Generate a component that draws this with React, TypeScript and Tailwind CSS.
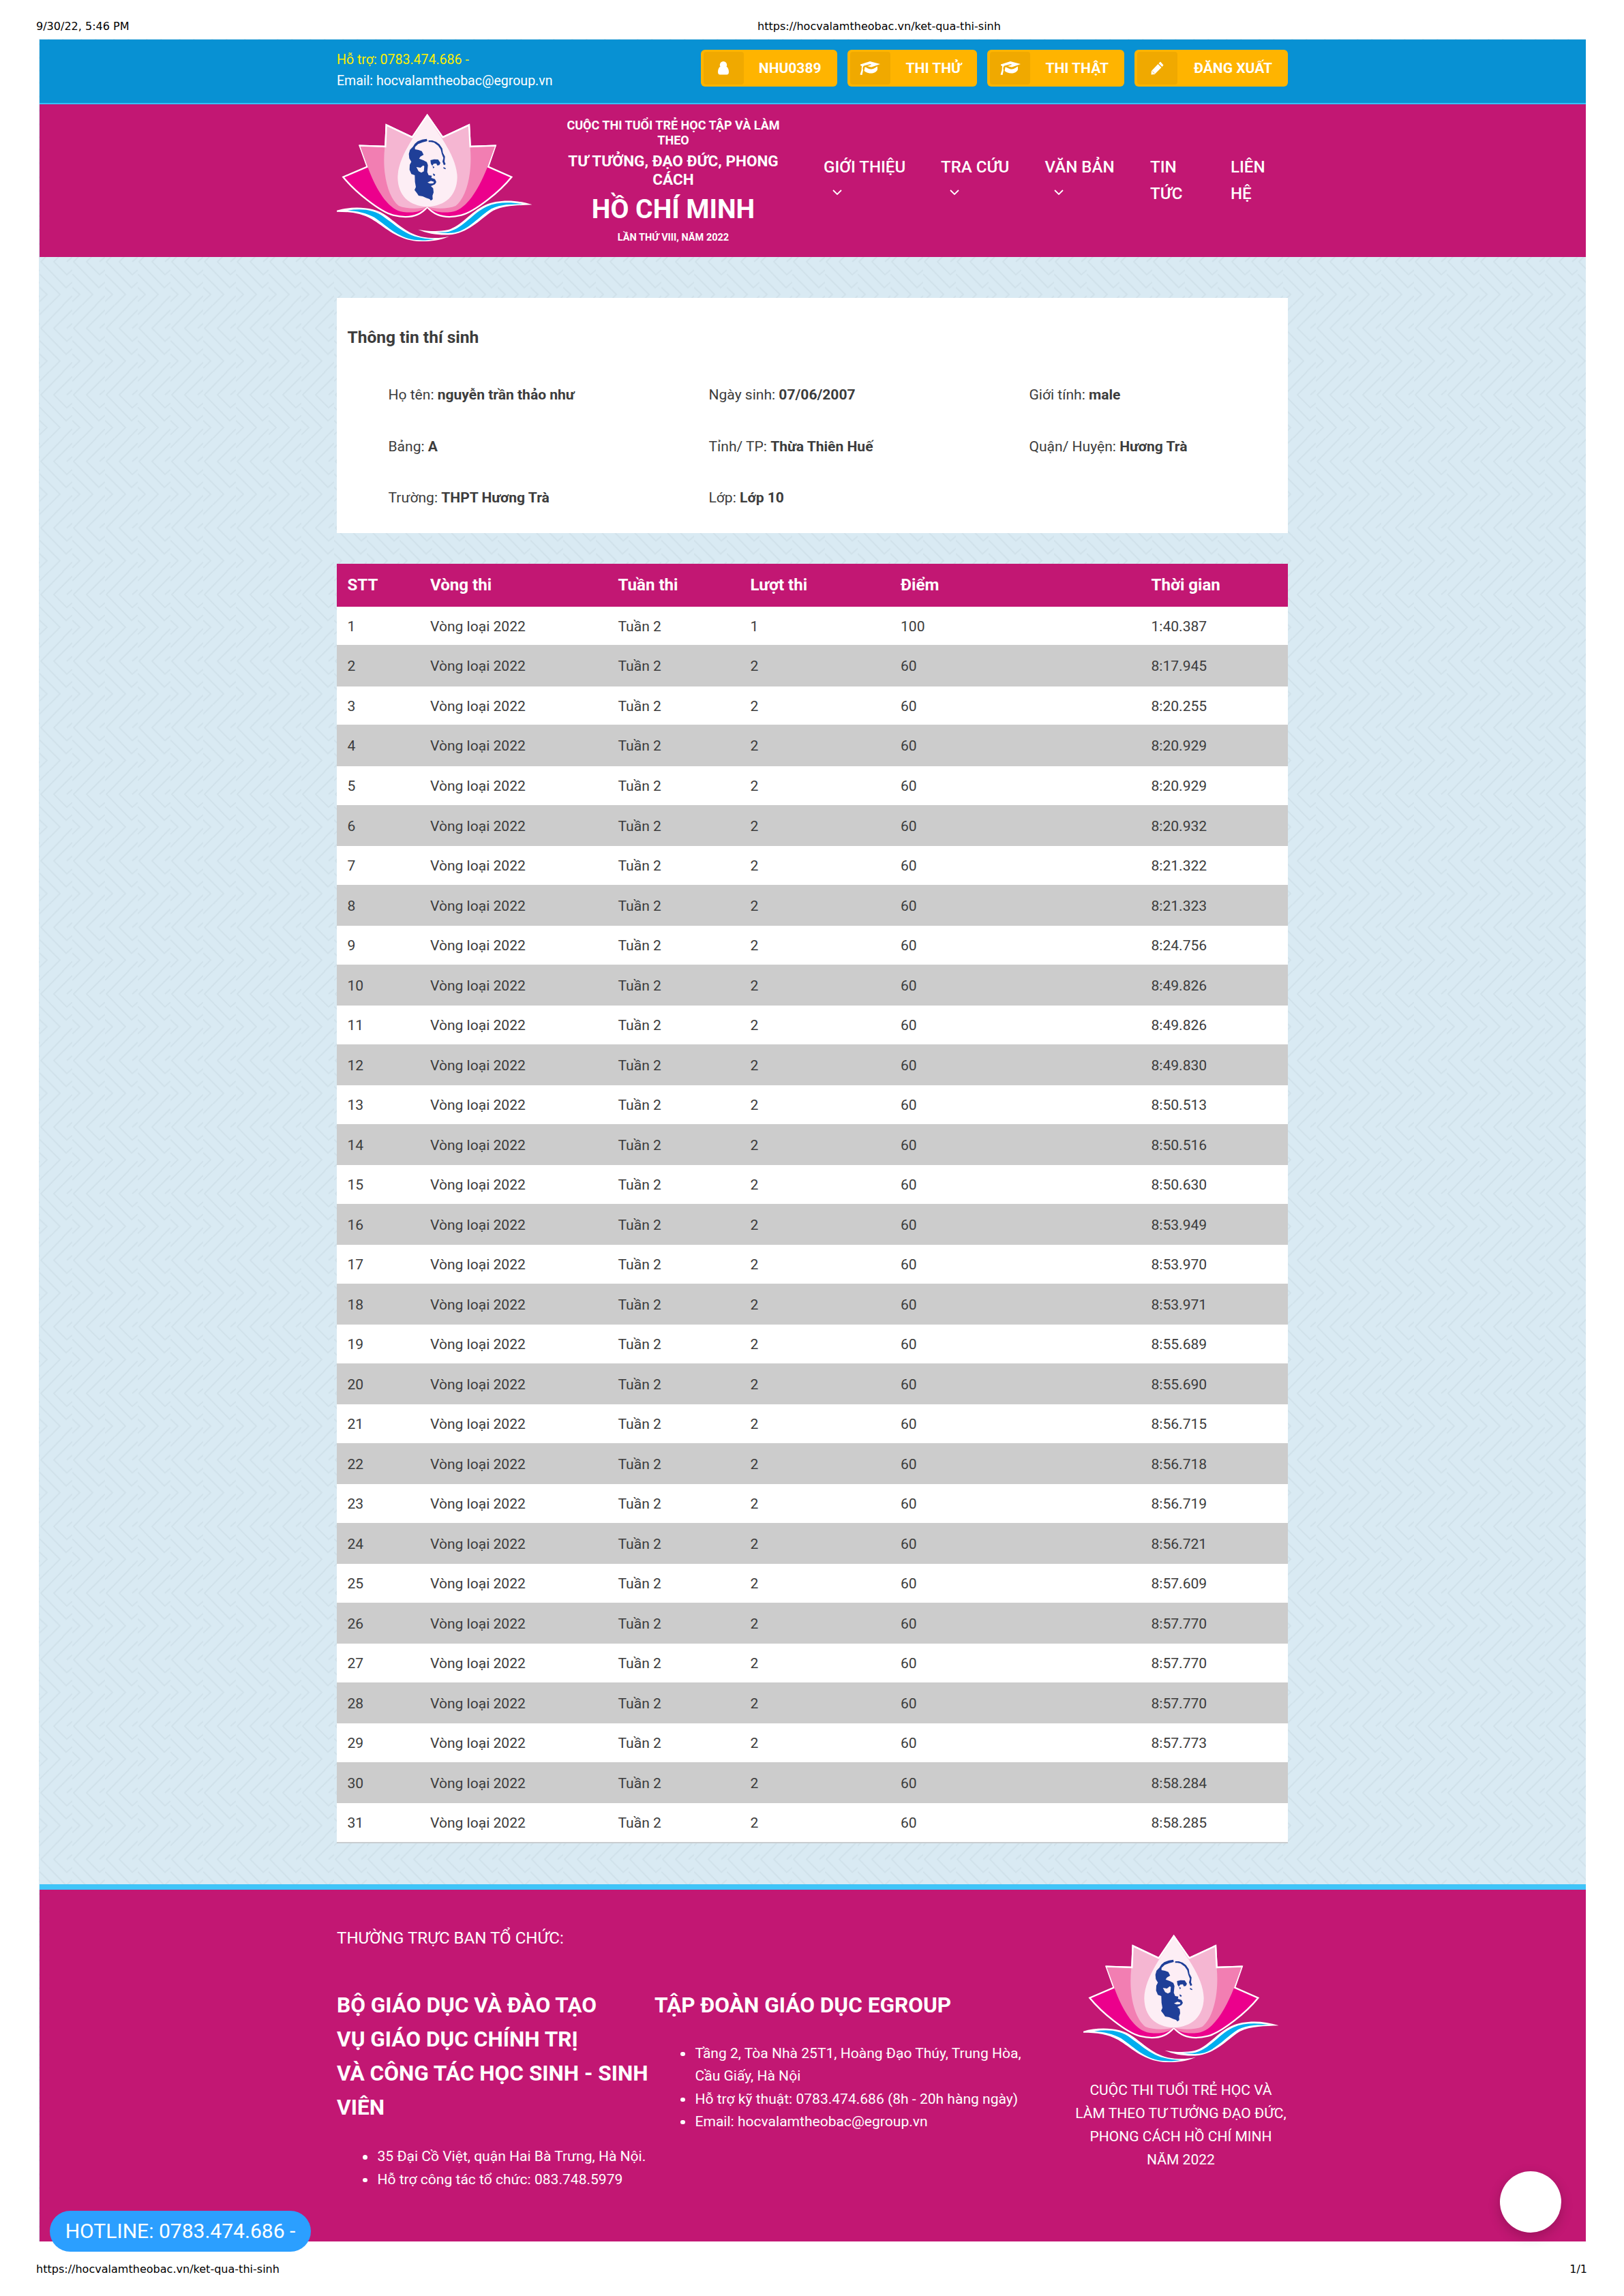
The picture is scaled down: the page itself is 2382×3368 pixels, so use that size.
import type { ReactNode } from "react";

const times = [
  "1:40.387", "8:17.945", "8:20.255", "8:20.929", "8:20.929", "8:20.932", "8:21.322", "8:21.323",
  "8:24.756", "8:49.826", "8:49.826", "8:49.830", "8:50.513", "8:50.516", "8:50.630", "8:53.949",
  "8:53.970", "8:53.971", "8:55.689", "8:55.690", "8:56.715", "8:56.718", "8:56.719", "8:56.721",
  "8:57.609", "8:57.770", "8:57.770", "8:57.770", "8:57.773", "8:58.284", "8:58.285",
];

const info: [string, string][] = [
  ["Họ tên", "nguyễn trần thảo như"],
  ["Ngày sinh", "07/06/2007"],
  ["Giới tính", "male"],
  ["Bảng", "A"],
  ["Tỉnh/ TP", "Thừa Thiên Huế"],
  ["Quận/ Huyện", "Hương Trà"],
  ["Trường", "THPT Hương Trà"],
  ["Lớp", "Lớp 10"],
];

const tableCols = "grid grid-cols-[121.5px_275.5px_194px_220.5px_367.5px_1fr] items-center *:pl-[15.5px]";

function Lotus() {
  return (
    <svg viewBox="42 50 858 561" className="block h-[187px] w-[286px]" aria-hidden="true">
      <g strokeLinejoin="miter" strokeLinecap="round">
        <path
          d="M440 56L508 153L624 99L629 194L740 190L708 283L811 328C760 392 650 480 590 496C535 510 480 506 440 460C402 506 346 510 290 496C230 480 122 392 70 328L176 283L143 190L256 194L260 99L374 153Z"
          fill="#ec008c"
          stroke="#fff"
          strokeWidth="7"
        />
        <path
          d="M145 193L256 196L260 101L374 155L440 60L508 155L623 101L628 196L738 193L705 284C665 385 610 475 545 482C500 487 465 482 440 459C415 482 380 487 335 482C270 475 215 385 178 284Z"
          fill="#f27eb2"
        />
        <path
          d="M260 101L374 155L440 60L508 155L623 101L629 196C640 320 610 420 565 455C530 470 470 468 440 459C410 468 350 470 315 455C270 420 240 320 253 196Z"
          fill="#f5b6d2"
        />
        <path
          d="M440 58C480 130 571 230 572 330C570 410 520 456 440 459C360 456 311 410 310 330C312 230 400 130 440 58Z"
          fill="#fdeef5"
        />
        <path d="M374 153L440 56L508 153M143 190L256 194L260 99L374 153M740 190L629 194L624 99L508 153" fill="none" stroke="#fff" strokeWidth="7" />
      </g>
      <g fill="#1f3f98">
        <path d="M438 160L418 163L398 171L385 182L377 195L364 208L359 226L361 246L370 261L363 274L362 296L370 315L385 320L386 350L390 372L384 385L394 398L402 410L420 413L435 420L450 425L456 432L464 426L463 410L468 396L466 378L456 368L474 360L480 350L474 337L458 332L460 322L446 320L440 306L443 276L438 262L424 255L404 247L410 238L424 230L416 214L402 209L386 206L386 196L400 183L420 175L440 170ZM392 284L410 287L422 277L427 280L425 303L414 309L402 303ZM441 352L456 345L470 349L466 356L452 357Z" fillRule="evenodd" />
        <path d="M446 167L462 167L479 173L494 184L506 202L509 222L518 238L516 260L521 272L513 276L507 260L511 244L504 226L499 206L488 190L470 177L456 174L446 174Z" />
        <path d="M454 254L470 250L488 251L498 266L493 276L484 277L480 268L468 270L462 279L456 270Z" />
        <path d="M512 284L522 290L520 294L511 290ZM463 280L472 284L467 291ZM466 312L475 318L472 324L466 320Z" />
      </g>
      <path d="M42 475C110 455 205 457 262 499C330 549 370 593 460 596C490 597 515 594 537 589C490 610 430 615 380 609C300 597 250 546 195 513C150 487 100 481 42 481Z" fill="#fff" />
      <path d="M902 450C830 426 750 427 695 451C630 481 590 544 530 561C490 569 445 567 400 559C445 579 500 586 550 581C630 568 680 507 730 476C780 452 840 453 902 450Z" fill="#fff" />
      <path d="M90 475C150 466 208 470 252 506C318 552 358 601 472 601C440 608 400 608 370 602C303 588 258 540 208 506C172 485 130 478 90 475Z" fill="#00aeef" />
      <path d="M860 447C800 437 746 439 702 458C637 488 602 550 536 568C520 571 500 571 480 570C510 576 540 576 560 573C622 562 668 501 722 468C768 445 815 448 860 447Z" fill="#00aeef" />
    </svg>
  );
}

function Chevrons() {
  return (
    <svg className="absolute inset-0 h-full w-full" aria-hidden="true">
      <defs>
        <pattern id="chevrons" x="1" y="0" width="48" height="97.65" patternUnits="userSpaceOnUse">
          <path
            d="M35 0L2 34L39 72L48 64M48 7L21 34L40 53L48 46M40 34L48 27M0 14L14 0M0 52L30 82L14 98M0 71.500L11 82L0 92.500M48 84L34 98"
            fill="none"
            stroke="#d0e1ea"
            strokeWidth="2"
          />
        </pattern>
      </defs>
      <rect width="100%" height="100%" fill="url(#chevrons)" />
    </svg>
  );
}

function UserIcon() {
  return (
    <svg viewBox="0 0 16 20" className="h-5 w-4" fill="#fff" aria-hidden="true">
      <circle cx="8" cy="5.200" r="5.200" />
      <path d="M4 7.500C1.500 8.500 0 11.500 0 15.500C0 18 1 19.500 3 19.500H13C15 19.500 16 18 16 15.500C16 11.500 14.500 8.500 12 7.500Z" />
    </svg>
  );
}

function CapIcon() {
  return (
    <svg viewBox="0 0 30 22" className="h-[22px] w-[30px]" fill="#fff" aria-hidden="true">
      <path d="M15 1L30 5L17 9.500L11 8L17 6L16 5L6 7.500C4.500 9 4.500 10.500 4.500 12L5 14L3.500 21L0.500 20.500L2.500 14L3 8L1 7V5.500Z" />
      <path d="M7.500 9.500C10 9 12 12.500 17 12.500C21 12.500 24 9 26 8.500V13C24.500 17 20.500 18.500 16.500 18.500C12.500 18.500 9 17 6.500 15Z" />
    </svg>
  );
}

function PencilIcon() {
  return (
    <svg viewBox="0 0 19 20" className="h-5 w-[19px]" fill="#fff" aria-hidden="true">
      <path d="M14 0.500L18.500 5.500L16.500 8L11.500 3ZM10.500 4L15.500 9L5.500 19L0.500 19.500L0.800 14.200Z" />
      <path d="M2 14.500L5.500 18" stroke="#f0a900" strokeWidth="0.800" />
    </svg>
  );
}

function TopButton({ width, icon, label }: { width: string; icon: ReactNode; label: string }) {
  return (
    <div className={`${width} flex h-[54px] items-center rounded-[6px] bg-[#ffb400] pl-1 pr-[23px]`}>
      <div className="flex h-12 w-[59px] items-center justify-center rounded-[4px] bg-[#f0a900]">{icon}</div>
      <span className="ml-auto whitespace-nowrap text-[21px] font-bold leading-6">{label}</span>
    </div>
  );
}

function NavItem({ width, label, menu }: { width: string; label: string; menu?: boolean }) {
  return (
    <div className={`${width} shrink-0 text-[24.1px] font-medium leading-[39px]`}>
      <div className="whitespace-pre">{label}</div>
      {menu && (
        <svg viewBox="0 0 14 8" className="ml-[13px] mt-[13px] h-2 w-[14px]" aria-hidden="true">
          <path d="M1 1L7 7L13 1" fill="none" stroke="#fff" strokeWidth="1.800" />
        </svg>
      )}
    </div>
  );
}

function Bullet({ children }: { children: ReactNode }) {
  return (
    <li className="flex">
      <span className="mr-[15px] mt-[15px] h-[6.500px] w-[6.500px] shrink-0 rounded-full bg-white" />
      <span className="whitespace-pre">{children}</span>
    </li>
  );
}

export default function App() {
  return (
    <div className="flex h-[3368px] w-[2382px] flex-col overflow-hidden bg-white font-['Roboto',sans-serif] text-[21.05px] text-[#3c3c3c]">
      <div className="flex h-[57px] shrink-0 pl-[53px] pt-[29px] font-['DejaVu_Sans',sans-serif] text-[16.05px] leading-5 text-black">
        <span className="w-[1058px]">9/30/22, 5:46 PM</span>
        <span>https://hocvalamtheobac.vn/ket-qua-thi-sinh</span>
      </div>

      <div className="relative ml-[57px] h-[3231px] w-[2269px] shrink-0 bg-[#d9eaf3] pl-px pt-px">
        <Chevrons />
        <div className="relative">
          <div className="flex h-[95px] justify-between border-b-2 border-[#37bff7] bg-[#0891d3] pl-[436px] pr-[437px] text-white">
            <div className="pt-[14px] text-[19.55px] leading-[31.2px]">
              <div className="text-[#fff000]">Hỗ trợ: 0783.474.686 -</div>
              <div>Email: hocvalamtheobac@egroup.vn</div>
            </div>
            <div className="flex gap-[15px] pt-[15px]">
              <TopButton width="w-[200px]" icon={<UserIcon />} label="NHU0389" />
              <TopButton width="w-[190.5px]" icon={<CapIcon />} label="THI THỬ" />
              <TopButton width="w-[201px]" icon={<CapIcon />} label="THI THẬT" />
              <TopButton width="w-[225px]" icon={<PencilIcon />} label="ĐĂNG XUẤT" />
            </div>
          </div>

          <header className="flex h-[224px] bg-[#c21773] pl-[436px] text-white">
            <div className="w-[286px] shrink-0 pt-[14px]">
              <Lotus />
            </div>
            <div className="ml-[37px] w-[341px] shrink-0 whitespace-nowrap pt-[20px] text-center font-bold">
              <div className="text-[18.05px] leading-[21.5px]">CUỘC THI TUỔI TRẺ HỌC TẬP VÀ LÀM<br />THEO</div>
              <div className="mt-[7px] text-[22.55px] leading-[27px]">TƯ TƯỞNG, ĐẠO ĐỨC, PHONG<br />CÁCH</div>
              <div className="mt-[7px] text-[39.1px] leading-[47px]">HỒ CHÍ MINH</div>
              <div className="mt-[9px] text-[14.5px] leading-[17.5px]">LẦN THỨ VIII, NĂM 2022</div>
            </div>
            <nav className="ml-[50px] flex pt-[73px]">
              <NavItem width="w-[172px]" label="GIỚI THIỆU" menu />
              <NavItem width="w-[152.5px]" label="TRA CỨU" menu />
              <NavItem width="w-[154.5px]" label="VĂN BẢN" menu />
              <NavItem width="w-[118px]" label={"TIN\nTỨC"} />
              <NavItem width="w-[80px]" label={"LIÊN\nHỆ"} />
            </nav>
          </header>

          <main className="ml-[436px] w-[1395px] pt-[60px]">
            <section className="h-[345px] bg-white pt-[41px]">
              <h2 className="pl-[15.5px] text-[24.55px] font-bold leading-[34px]">Thông tin thí sinh</h2>
              <div className="mt-[29.5px] grid auto-rows-[75.25px] grid-cols-[470px_470px_1fr] items-center pl-[75.5px]">
                {info.map(([label, value]) => (
                  <div key={label}>
                    {label}: <b className="font-bold">{value}</b>
                  </div>
                ))}
              </div>
            </section>

            <section className="mt-[45px] border-b-2 border-[#c9cdd0]">
              <div className={`${tableCols} h-[63px] bg-[#c21773] text-[24.1px] font-bold text-white`}>
                <div>STT</div>
                <div>Vòng thi</div>
                <div>Tuần thi</div>
                <div>Lượt thi</div>
                <div>Điểm</div>
                <div>Thời gian</div>
              </div>
              {times.map((time, i) => (
                <div
                  key={i}
                  className={`${tableCols} pt-px ${i % 2 ? "h-[60.6px] bg-[#cccccc]" : "h-[56.45px] bg-white"}`}
                >
                  <div>{i + 1}</div>
                  <div>Vòng loại 2022</div>
                  <div>Tuần 2</div>
                  <div>{i === 0 ? 1 : 2}</div>
                  <div>{i === 0 ? 100 : 60}</div>
                  <div>{time}</div>
                </div>
              ))}
            </section>
          </main>

          <footer className="mt-[60px] flex h-[524px] border-t-8 border-[#40c4f8] bg-[#c21773] pl-[436px] text-white">
            <div className="w-[466px] shrink-0 whitespace-nowrap pt-[51px]">
              <div className="text-[24.1px] leading-10">THƯỜNG TRỰC BAN TỔ CHỨC:</div>
              <h3 className="mt-[54px] text-[31.6px] font-bold leading-[50.1px]">
                BỘ GIÁO DỤC VÀ ĐÀO TẠO<br />VỤ GIÁO DỤC CHÍNH TRỊ<br />VÀ CÔNG TÁC HỌC SINH - SINH<br />VIÊN
              </h3>
              <ul className="ml-[38px] mt-[29px] leading-[33.3px]">
                <Bullet>35 Đại Cồ Việt, quận Hai Bà Trưng, Hà Nội.</Bullet>
                <Bullet>Hỗ trợ công tác tổ chức: 083.748.5979</Bullet>
              </ul>
            </div>
            <div className="w-[560px] shrink-0 whitespace-nowrap pt-[145px]">
              <h3 className="text-[31.6px] font-bold leading-[50px]">TẬP ĐOÀN GIÁO DỤC EGROUP</h3>
              <ul className="ml-[38px] mt-[28px] leading-[33.3px]">
                <Bullet>{"Tầng 2, Tòa Nhà 25T1, Hoàng Đạo Thúy, Trung Hòa,\nCầu Giấy, Hà Nội"}</Bullet>
                <Bullet>Hỗ trợ kỹ thuật: 0783.474.686 (8h - 20h hàng ngày)</Bullet>
                <Bullet>Email: hocvalamtheobac@egroup.vn</Bullet>
              </ul>
            </div>
            <div className="ml-[42px] flex w-[340px] shrink-0 flex-col items-center pt-[66px]">
              <Lotus />
              <p className="mt-6 whitespace-nowrap text-center leading-[33.9px]">
                CUỘC THI TUỔI TRẺ HỌC VÀ<br />LÀM THEO TƯ TƯỞNG ĐẠO ĐỨC,<br />PHONG CÁCH HỒ CHÍ MINH<br />NĂM 2022
              </p>
            </div>
          </footer>
        </div>

        <div className="absolute bottom-[-15px] left-4 flex h-[60px] w-[383px] items-center justify-center rounded-[30px] bg-[#2b9fff] text-[30.05px] text-white">
          HOTLINE: 0783.474.686 -
        </div>
        <div className="absolute bottom-[13px] right-[36px] h-[90px] w-[90px] rounded-full bg-white shadow-[0_6px_18px_rgba(0,0,0,0.2)]" />
      </div>

      <div className="flex justify-between pl-[53px] pr-[54px] pt-[31px] font-['DejaVu_Sans',sans-serif] text-[16.05px] leading-5 text-black">
        <span>https://hocvalamtheobac.vn/ket-qua-thi-sinh</span>
        <span>1/1</span>
      </div>
    </div>
  );
}
